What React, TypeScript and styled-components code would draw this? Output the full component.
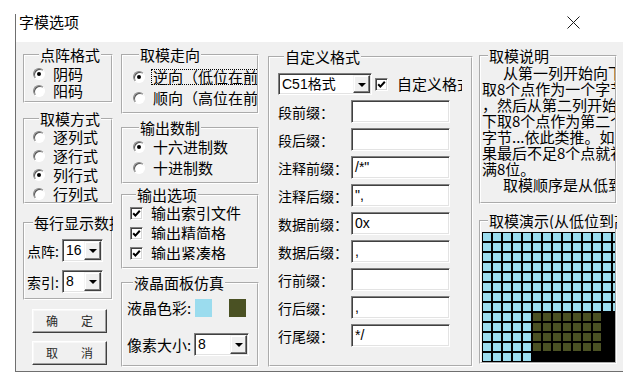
import React from "react";
import styled, { createGlobalStyle } from "styled-components";

const GlobalStyle = createGlobalStyle`
  html, body {
    margin: 0;
    padding: 0;
    background: #fff;
  }
  body {
    font-family: "Noto Sans CJK SC", "Liberation Sans", sans-serif;
    color: #000;
  }
`;

const Window = styled.div`
  margin: 14px 0 0 15px;
  width: 607px;
  border-left: 1px solid #6f6f6f;
  border-bottom: 1px solid #6f6f6f;
`;

const TitleBar = styled.div`
  height: 28px;
  display: flex;
  justify-content: space-between;
  align-items: flex-start;
  padding: 0 43px 0 3px;
  background: #fff;
`;

const Title = styled.span`
  font-size: 15px;
  line-height: 16px;
`;

const CloseIcon = styled.svg`
  margin-top: 2px;
`;

const Client = styled.div`
  height: 329px;
  box-sizing: border-box;
  display: flex;
  align-items: flex-start;
  padding: 0 5px 0 7px;
  background: #f0f0f0;
`;

const Column = styled.div<{ $w: number; $ml?: number }>`
  width: ${(p) => p.$w}px;
  margin-left: ${(p) => p.$ml ?? 0}px;
  display: flex;
  flex-direction: column;
`;

const Group = styled.fieldset<{ $h: number; $mt: number; $pt?: number; $pl?: number }>`
  margin: ${(p) => p.$mt}px 0 0;
  padding: ${(p) => p.$pt ?? 0}px 0 0 ${(p) => p.$pl ?? 0}px;
  height: ${(p) => p.$h}px;
  box-sizing: border-box;
  border: 2px groove #fff;
  min-width: 0;
  display: flex;
  flex-direction: column;
`;

const Legend = styled.legend`
  margin-left: 6px;
  padding: 0 1px;
  font-size: 15px;
  line-height: 16px;
  white-space: nowrap;
  overflow: hidden;
  max-width: calc(100% - 6px);
`;

const OptionRow = styled.div<{ $h: number }>`
  display: flex;
  align-items: center;
  gap: 6px;
  height: ${(p) => p.$h}px;
  white-space: nowrap;
  overflow: hidden;
  flex: none;
`;

const OptionText = styled.span<{ $focus?: boolean; $w?: number }>`
  font-size: 15px;
  line-height: 14px;
  padding: 0 1px;
  border: 1px dotted ${(p) => (p.$focus ? "#000" : "transparent")};
  ${(p) => (p.$w ? `width: ${p.$w}px; height: 14px; overflow: hidden; white-space: normal;` : "")}
`;

const RadioDot = styled.span<{ $on?: boolean }>`
  width: 12px;
  height: 12px;
  flex: none;
  box-sizing: border-box;
  border-radius: 50%;
  background: #fff;
  border: 1px solid;
  border-color: #8a8a8a #fff #fff #8a8a8a;
  box-shadow: inset 1px 1px 0 #555;
  position: relative;

  &::after {
    content: "";
    display: ${(p) => (p.$on ? "block" : "none")};
    position: absolute;
    left: 3px;
    top: 3px;
    width: 4px;
    height: 4px;
    border-radius: 50%;
    background: #000;
  }
`;

const CheckBox = styled.span<{ $ml?: number }>`
  width: 13px;
  height: 13px;
  flex: none;
  margin-left: ${(p) => p.$ml ?? 0}px;
  box-sizing: border-box;
  background: #fff;
  border: 1px solid;
  border-color: #808080 #fff #fff #808080;
  box-shadow: inset 1px 1px 0 #404040, inset -1px -1px 0 #d8d8d8;
  display: flex;
  align-items: center;
  justify-content: center;
`;

const Sunken = styled.div<{ $w: number; $h?: number }>`
  width: ${(p) => p.$w}px;
  height: ${(p) => p.$h ?? 23}px;
  flex: none;
  box-sizing: border-box;
  display: flex;
  align-items: stretch;
  background: #fff;
  border: 1px solid;
  border-color: #808080 #fff #fff #808080;
  box-shadow: inset 1px 1px 0 #404040, inset -1px -1px 0 #e3e3e3;
`;

const FieldText = styled.span`
  flex: 1;
  padding: 1px 0 0 3px;
  font-family: "Liberation Sans", "Noto Sans CJK SC", sans-serif;
  font-size: 14px;
  line-height: 19px;
  white-space: nowrap;
  overflow: hidden;
`;

const ComboText = styled(FieldText)`
  font-family: "Liberation Sans", "Noto Sans CJK SC", sans-serif;
`;

const ComboButton = styled.span`
  width: 17px;
  margin: 1px 1px 1px 0;
  box-sizing: border-box;
  background: #f0f0f0;
  border: 1px solid;
  border-color: #f4f4f4 #404040 #404040 #f4f4f4;
  box-shadow: inset -1px -1px 0 #808080, inset 1px 1px 0 #fff;
  display: flex;
  align-items: center;
  justify-content: center;

  &::after {
    content: "";
    border-left: 4px solid transparent;
    border-right: 4px solid transparent;
    border-top: 4px solid #000;
    margin-top: 1px;
  }
`;

const FieldRow = styled.div<{ $mt?: number }>`
  display: flex;
  align-items: center;
  margin-top: ${(p) => p.$mt ?? 0}px;
  flex: none;
`;

const FieldLabel = styled.span<{ $w: number; $size?: number }>`
  width: ${(p) => p.$w}px;
  flex: none;
  font-size: ${(p) => p.$size ?? 14}px;
  line-height: 16px;
  white-space: nowrap;
  overflow: hidden;
`;

const Swatch = styled.span<{ $c: string; $ml: number }>`
  width: 17px;
  height: 18px;
  margin-left: ${(p) => p.$ml}px;
  background: ${(p) => p.$c};
  flex: none;
`;

const PushButton = styled.button<{ $mt: number }>`
  margin: ${(p) => p.$mt}px 0 0 9px;
  width: 75px;
  height: 24px;
  padding: 0;
  box-sizing: border-box;
  background: #f0f0f0;
  border: 1px solid;
  border-color: #fff #404040 #404040 #fff;
  box-shadow: inset -1px -1px 0 #a0a0a0, inset 1px 1px 0 #f8f8f8;
  display: flex;
  align-items: center;
  justify-content: center;
  gap: 23px;
  font-family: "Noto Sans CJK SC", sans-serif;
  font-size: 12px;
  line-height: 14px;
  color: #2a2a2a;
`;

const Explain = styled.div`
  overflow: hidden;
  padding-top: 1px;
`;

const ExplainLine = styled.div<{ $indent?: boolean }>`
  font-size: 15px;
  line-height: 16px;
  height: 16px;
  white-space: nowrap;
  padding-left: ${(p) => (p.$indent ? 21 : 0)}px;
`;

const LcdGrid = styled.div`
  margin-top: 3px;
  height: 130px;
  overflow: hidden;
  background: #000;
  display: grid;
  grid-template-columns: repeat(14, 10px);
  grid-auto-rows: 10px;
`;

const LcdCell = styled.span<{ $c: string }>`
  box-sizing: border-box;
  border: 1px solid #000;
  background: ${(p) => p.$c};
`;

const LCD_ON = "#9bdcee";
const LCD_OFF = "#4a5123";

const Radio = ({ on, label, focus }: { on?: boolean; label: string; focus?: boolean }) => (
  <>
    <RadioDot $on={on} />
    <OptionText $focus={focus}>{label}</OptionText>
  </>
);

const Check = () => (
  <CheckBox>
    <svg width="9" height="9" viewBox="0 0 9 9">
      <polyline points="1.2,4.2 3.4,6.6 7.8,1.8" fill="none" stroke="#000" strokeWidth="2" />
    </svg>
  </CheckBox>
);

const Combo = ({ w, h, value }: { w: number; h?: number; value: string }) => (
  <Sunken $w={w} $h={h}>
    <ComboText>{value}</ComboText>
    <ComboButton />
  </Sunken>
);

const fields: [string, string][] = [
  ["段前缀：", ""],
  ["段后缀：", ""],
  ["注释前缀：", '/*"'],
  ["注释后缀：", '",'],
  ["数据前缀：", "0x"],
  ["数据后缀：", ","],
  ["行前缀：", ""],
  ["行后缀：", ","],
  ["行尾缀：", "*/"],
];

const explainLines = [
  { text: "从第一列开始向下", indent: true },
  { text: "取8个点作为一个字节" },
  { text: "，然后从第二列开始向" },
  { text: "下取8个点作为第二个" },
  { text: "字节...依此类推。如" },
  { text: "果最后不足8个点就补" },
  { text: "满8位。" },
  { text: "取模顺序是从低到高", indent: true },
];

const cellColor = (row: number, col: number) => {
  if (row >= 8 && col >= 5) return row <= 11 && col <= 11 ? LCD_OFF : "#000";
  return LCD_ON;
};

const App = () => {
  const cells: React.ReactNode[] = [];
  for (let r = 0; r < 13; r++) {
    for (let c = 0; c < 14; c++) {
      cells.push(<LcdCell key={`${r}-${c}`} $c={cellColor(r, c)} />);
    }
  }

  return (
    <>
      <GlobalStyle />
      <Window>
        <TitleBar>
          <Title>字模选项</Title>
          <CloseIcon width="13" height="13" viewBox="0 0 13 13">
            <path d="M0.5 0.5 L12.5 12.5 M12.5 0.5 L0.5 12.5" stroke="#1a1a1a" strokeWidth="1" />
          </CloseIcon>
        </TitleBar>
        <Client>
          <Column $w={90}>
            <Group $h={56} $mt={5} $pt={2} $pl={8}>
              <Legend>点阵格式</Legend>
              <OptionRow $h={17}>
                <Radio on label="阴码" />
              </OptionRow>
              <OptionRow $h={17}>
                <Radio label="阳码" />
              </OptionRow>
            </Group>
            <Group $h={93} $mt={8} $pl={8}>
              <Legend>取模方式</Legend>
              <OptionRow $h={19}>
                <Radio label="逐列式" />
              </OptionRow>
              <OptionRow $h={19}>
                <Radio label="逐行式" />
              </OptionRow>
              <OptionRow $h={19}>
                <Radio on label="列行式" />
              </OptionRow>
              <OptionRow $h={19}>
                <Radio label="行列式" />
              </OptionRow>
            </Group>
            <Group $h={85} $mt={11} $pt={8} $pl={2}>
              <Legend>每行显示数据</Legend>
              <FieldRow>
                <FieldLabel $w={35}>点阵:</FieldLabel>
                <Combo w={41} value="16" />
              </FieldRow>
              <FieldRow $mt={8}>
                <FieldLabel $w={35}>索引:</FieldLabel>
                <Combo w={41} value="8" />
              </FieldRow>
            </Group>
            <PushButton $mt={9}>
              <span>确</span>
              <span>定</span>
            </PushButton>
            <PushButton $mt={8}>
              <span>取</span>
              <span>消</span>
            </PushButton>
          </Column>

          <Column $w={138} $ml={8}>
            <Group $h={67} $mt={5} $pt={3} $pl={10}>
              <Legend>取模走向</Legend>
              <OptionRow $h={21}>
                <Radio on focus label="逆向（低位在前）" />
              </OptionRow>
              <OptionRow $h={21}>
                <Radio label="顺向（高位在前）" />
              </OptionRow>
            </Group>
            <Group $h={64} $mt={6} $pl={10}>
              <Legend>输出数制</Legend>
              <OptionRow $h={21}>
                <Radio on label="十六进制数" />
              </OptionRow>
              <OptionRow $h={21}>
                <Radio label="十进制数" />
              </OptionRow>
            </Group>
            <Group $h={82} $mt={3} $pl={7}>
              <Legend>输出选项</Legend>
              <OptionRow $h={20}>
                <Check />
                <OptionText>输出索引文件</OptionText>
              </OptionRow>
              <OptionRow $h={20}>
                <Check />
                <OptionText $w={84}>输出精简格式</OptionText>
              </OptionRow>
              <OptionRow $h={20}>
                <Check />
                <OptionText $w={86}>输出紧凑格式</OptionText>
              </OptionRow>
            </Group>
            <Group $h={92} $mt={6} $pt={8} $pl={4}>
              <Legend>液晶面板仿真</Legend>
              <FieldRow>
                <FieldLabel $w={67} $size={15}>
                  液晶色彩:
                </FieldLabel>
                <Swatch $c={LCD_ON} $ml={1} />
                <Swatch $c={LCD_OFF} $ml={17} />
              </FieldRow>
              <FieldRow $mt={16}>
                <FieldLabel $w={67} $size={15}>
                  像素大小:
                </FieldLabel>
                <Combo w={55} value="8" />
              </FieldRow>
            </Group>
          </Column>

          <Column $w={205} $ml={9}>
            <Group $h={318} $mt={7} $pt={8} $pl={8}>
              <Legend>自定义格式</Legend>
              <FieldRow>
                <Combo w={94} h={22} value="C51格式" />
                <CheckBox $ml={3}>
                  <svg width="9" height="9" viewBox="0 0 9 9">
                    <polyline points="1.2,4.2 3.4,6.6 7.8,1.8" fill="none" stroke="#000" strokeWidth="2" />
                  </svg>
                </CheckBox>
                <FieldLabel $w={65} $size={15} style={{ marginLeft: 9 }}>
                  自定义格式
                </FieldLabel>
              </FieldRow>
              {fields.map(([label, value], i) => (
                <FieldRow key={label} $mt={i === 0 ? 5 : 5}>
                  <FieldLabel $w={73}>{label}</FieldLabel>
                  <Sunken $w={99}>
                    <FieldText>{value}</FieldText>
                  </Sunken>
                </FieldRow>
              ))}
            </Group>
          </Column>

          <Column $w={138} $ml={6}>
            <Group $h={156} $mt={6} $pl={1}>
              <Legend>取模说明</Legend>
              <Explain>
                {explainLines.map((line, i) => (
                  <ExplainLine key={i} $indent={line.indent}>
                    {line.text}
                  </ExplainLine>
                ))}
              </Explain>
            </Group>
            <Group $h={151} $mt={9} $pl={1}>
              <Legend>取模演示(从低位到高位)</Legend>
              <LcdGrid>{cells}</LcdGrid>
            </Group>
          </Column>
        </Client>
      </Window>
    </>
  );
};

export default App;
